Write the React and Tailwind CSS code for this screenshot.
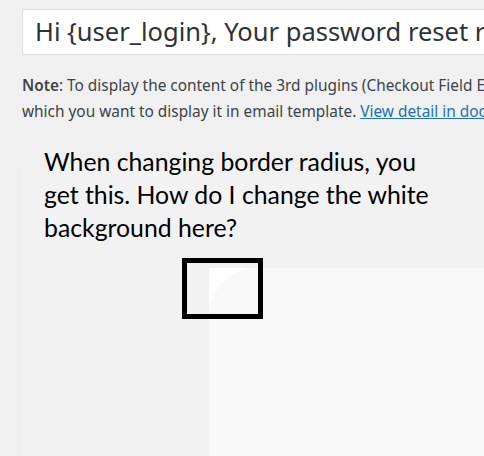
export default function App() {
  return (
    <div className="relative w-[484px] h-[456px] overflow-hidden bg-[#f0f0f1]" style={{ fontFamily: '"Noto Sans", "Open Sans", sans-serif' }}>
      <div className="pt-[9px] pl-[22px]">
        <div className="h-[46px] w-[520px] border border-[#dcdcde] bg-white pl-[12px] flex items-center">
          <span className="whitespace-nowrap text-[25.5px] leading-none text-[#2c3338]">Hi {'{user_login}'}, Your password reset request</span>
        </div>
      </div>
      <div className="pl-[22px] pt-[18px] w-[600px] text-[15.4px] leading-[26px] text-[#3c434a]">
        <p className="whitespace-nowrap"><b className="font-semibold">Note</b>: To display the content of the 3rd plugins (Checkout Field Editor)</p>
        <p className="whitespace-nowrap">which you want to display it in email template. <a className="text-[#2271b1] underline">View detail in document</a></p>
      </div>
      <div className="ml-[22px] mt-[43px] h-[300px] bg-[#f2f2f2] pt-[100px] pl-[187px]">
        <div className="bg-white h-full">
          <div className="bg-[#f9f9f9] h-full rounded-tl-[48px]"></div>
        </div>
      </div>
      <div className="absolute left-[44px] top-[145px] w-[440px] text-[24.8px] leading-[33px] text-black" style={{ fontFamily: 'Lato, "Open Sans", sans-serif' }}>
        <p>When changing border radius, you</p>
        <p>get this. How do I change the white</p>
        <p>background here?</p>
      </div>
      <div className="absolute left-[182px] top-[258px] w-[81px] h-[61px] border-[5px] border-black"></div>
    </div>
  );
}
